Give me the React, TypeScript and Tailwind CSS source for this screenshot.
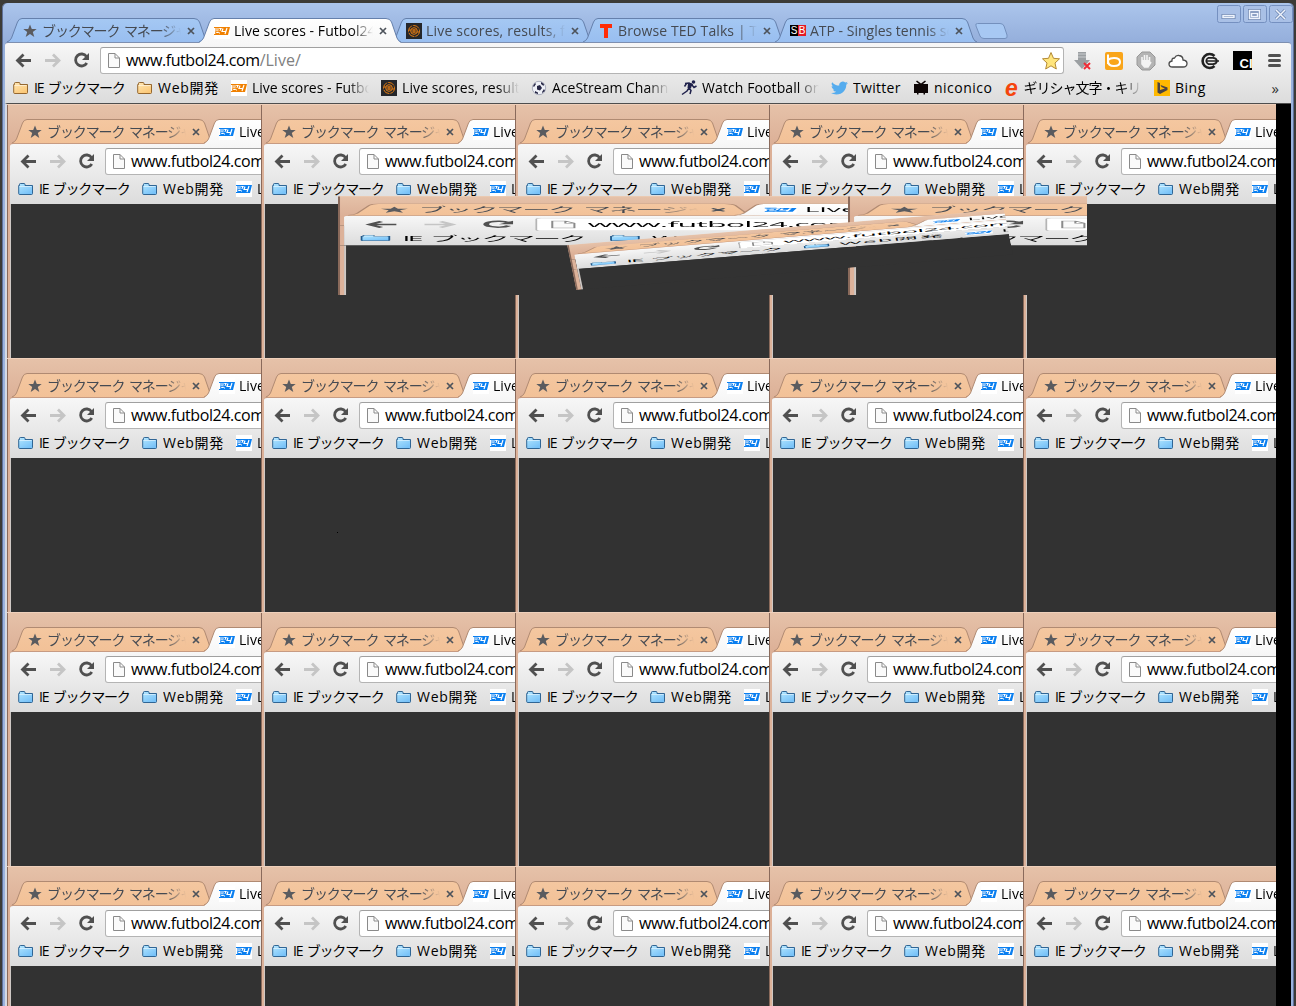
import React from "react";

type Theme = {
  tab: string; tab2: string; edge: string; folderA: string; folderB: string; folderEdge: string; accent: string;
};
const BLUE: Theme = { tab: "#a5c8f3", tab2: "#98bef0", edge: "#6580ac", folderA: "#ffe7b4", folderB: "#fbc878", folderEdge: "#8a5a20", accent: "#f08000" };
const PEACH: Theme = { tab: "#f4c7a0", tab2: "#f2c197", edge: "#b08a72", folderA: "#b4e7ff", folderB: "#78c2f8", folderEdge: "#20588a", accent: "#0a7ff0" };

const FADE = "[mask-image:linear-gradient(to_right,black_calc(100%_-_21px),transparent)]";

function Text24({ theme }: { theme: Theme }) {
  return (
    <svg width="16" height="16" viewBox="0 0 16 16" className="shrink-0">
      <rect width="16" height="16" fill="#fff" />
      <path d="M6 4H16L14 12H4Z" fill={theme.accent} />
      <path d="M0 4.5H6M1 8H6M0 11.5H5" stroke={theme.accent} strokeWidth="1.2" />
      <path d="M3 5.5H7L6 7.5H3L2.500 10H6M9 5.500L8 8.500H12M13 5L11 11" stroke="#fff" strokeWidth="1.2" fill="none" />
      <path d="M1 6H5.500L5 8L2 8.300L1.500 10.500H5" stroke={theme.accent} strokeWidth="1" fill="none" />
    </svg>
  );
}

function Folder({ theme, id }: { theme: Theme; id: string }) {
  return (
    <svg width="16" height="16" viewBox="0 0 16 16" className="shrink-0">
      <defs><linearGradient id={id} x1="0" y1="0" x2="0.6" y2="1"><stop stopColor={theme.folderA} /><stop offset="1" stopColor={theme.folderB} /></linearGradient></defs>
      <path d="M.7 12.500V4.500H1.500V3.200Q1.500 2.500 2.500 2.500H6Q7 2.500 7 3.500V4.500H14.500V12.500Q14.500 13.500 13.500 13.500H1.700Q.7 13.500 .7 12.500Z" fill={`url(#${id})`} stroke={theme.folderEdge} strokeWidth=".9" />
      <path d="M1.500 5.500H13.500" stroke="#fff" strokeOpacity=".5" />
    </svg>
  );
}

const Swirl = () => (
  <svg width="16" height="16" viewBox="0 0 16 16" className="shrink-0">
    <rect width="16" height="16" fill="#25272b" />
    <g fill="none" stroke="#e27b12"><circle cx="8" cy="8" r="5.500" strokeDasharray="7 1" /><circle cx="8" cy="8" r="3.300" /><path d="M5.500 7H10.500M5.500 9H10.500M8 6V10M3 7H5M11 9H13" /></g>
  </svg>
);
const Ted = () => <svg width="16" height="16" viewBox="0 0 16 16" className="shrink-0"><path d="M2 1H14V5H10V15H6V5H2Z" fill="#ff2b06" /></svg>;
const SB = () => (
  <div className="flex h-[11px] w-4 shrink-0 font-['Liberation_Sans'] text-[10px] leading-[11px] text-white">
    <span className="w-2 bg-black text-center">S</span><span className="w-2 bg-[#e31b23] text-center">B</span>
  </div>
);
const Ball = () => (
  <svg width="16" height="16" viewBox="0 0 16 16" className="shrink-0">
    <circle cx="8" cy="8" r="6.700" fill="#eef0f6" stroke="#8d90a5" strokeWidth=".7" />
    <path d="M6 6L9 5L11 8L9 10.500L6 9.500ZM2 6L4 3L5 4L3 7ZM10 2L13 4L12.500 6L10 4ZM13 9L14 11L11 13L11 12ZM4 11L7 12.500L7 14L4 13Z" fill="#262645" />
  </svg>
);
const Runner = () => (
  <svg width="16" height="16" viewBox="0 0 16 16" className="shrink-0">
    <circle cx="12.500" cy="2" r="1.800" fill="#20224c" />
    <path d="M4 3.500L8 3L11 4.500L8 8L10 10.500L9 14M8 8L6 11L1 14.500M11 5L13 7.500L15.500 6M5.500 3.500L3.500 6.500" stroke="#20224c" strokeWidth="1.500" fill="none" />
    <path d="M7 3.500L11 3.500L10 8.500L6.500 8Z" fill="#20224c" />
  </svg>
);
const Bird = () => (
  <svg width="17" height="16" viewBox="0 0 24 24" preserveAspectRatio="none" className="shrink-0">
    <path fill="#55acee" d="M23.950 4.600a10 10 0 0 1-2.800.8 4.900 4.900 0 0 0 2.100-2.700 10 10 0 0 1-3.100 1.200 4.900 4.900 0 0 0-8.400 4.500A14 14 0 0 1 1.700 3.200a4.900 4.900 0 0 0 1.500 6.500 4.900 4.900 0 0 1-2.200-.6 4.900 4.900 0 0 0 3.900 4.900 5 5 0 0 1-2.200.1 4.900 4.900 0 0 0 4.600 3.400A9.900 9.900 0 0 1 0 19.500 14 14 0 0 0 7.500 21.700c9.100 0 14-7.500 14-14v-.6a10 10 0 0 0 2.450-2.500z" />
  </svg>
);
const Nico = () => (
  <svg width="16" height="16" viewBox="0 0 16 16" className="shrink-0">
    <path d="M1 4H6L3 1.500L4 .5L8 3.500L12 .5L13 1.500L10 4H15V13H12V14.500H10.500V13H5.500V14.500H4V13H1Z" fill="#0e0606" />
  </svg>
);
const Bing = () => (
  <svg width="16" height="16" viewBox="0 0 16 16" className="shrink-0"><rect width="16" height="16" fill="#ffb900" /><path d="M3.500 2L6 3V10L11 8.500L7.500 7L6.500 5L13.500 7.500V10L6 14L3.500 12.500Z" fill="#4a4444" /></svg>
);

function Close() {
  return <svg width="8" height="8" viewBox="0 0 8 8" className="mt-px shrink-0"><path d="M1 1L7 7M7 1L1 7" stroke="#4d535b" strokeWidth="1.700" /></svg>;
}

function Tab({ theme, active, icon, children, id }: { theme: Theme; active?: boolean; icon: React.ReactNode; children: React.ReactNode; id: string }) {
  return (
    <div className={active ? "relative z-10 -mr-[5px] h-6 w-[197px] shrink-0" : "relative -mr-[5px] h-6 w-[197px] shrink-0"}>
      <svg width="205" height="25" viewBox="0 0 205 25" className="absolute -left-[4px] top-0">
        <defs><linearGradient id={id} x1="0" y1="0" x2="0" y2="1"><stop stopColor={active ? "#fff" : theme.tab} /><stop offset="1" stopColor={active ? "#f7f7f7" : theme.tab2} /></linearGradient></defs>
        <path d="M0 25Q3 23 4.500 20L10.500 4Q12 .5 15 .5H187Q191 .5 192.500 4L198 20Q199.500 23.500 202 25Z" fill={`url(#${id})`} />
        <path d="M0 24Q3 23 4.500 20L10.500 4Q12 .5 15 .5H187Q191 .5 192.500 4L198 20Q199.500 23.500 202 24" fill="none" stroke={theme.edge} />
        {!active && <path d="M0 24.500H205" stroke={theme.edge} />}
      </svg>
      <div className="relative flex h-full items-center pl-[11px] pt-px">
        {icon}
        <div className={"ml-1 h-6 w-[139px] shrink-0 overflow-hidden whitespace-nowrap text-[14px] leading-6 " + FADE + (active ? " text-black" : " text-[#454a52]")}>{children}</div>
        <span className="ml-[6px]"><Close /></span>
      </div>
    </div>
  );
}

const Star = () => <svg width="16" height="16" viewBox="0 0 16 16" className="shrink-0"><path d="M8 1.500L9.800 6H14.700L10.800 9L12.300 14L8 11L3.700 14L5.200 9L1.300 6H6.200Z" fill="#5a5b5f" /></svg>;

function TabStrip({ theme, full, id }: { theme: Theme; full?: boolean; id: string }) {
  return (
    <div className="flex h-6 pl-[9px]">
      <Tab theme={theme} icon={<Star />} id={id + "a"}><span className="tracking-[-1.1px] [word-spacing:2px]">ブックマーク マネージャ</span></Tab>
      <Tab theme={theme} active icon={<Text24 theme={theme} />} id={id + "b"}><span className="tracking-[0.05px]">Live scores - Futbol24</span></Tab>
      {full && <>
        <Tab theme={theme} icon={<Swirl />} id={id + "c"}><span className="tracking-[0.2px]">Live scores, results, fix</span></Tab>
        <Tab theme={theme} icon={<Ted />} id={id + "d"}><span className="tracking-[0.1px]">Browse TED Talks | TED</span></Tab>
        <Tab theme={theme} icon={<SB />} id={id + "e"}><span>ATP - Singles tennis sc</span></Tab>
        <svg width="34" height="18" viewBox="0 0 34 18" className="ml-1 mt-[5px]"><path d="M2.500 .5H25Q28 .5 29 3L32 12Q33 15.500 30 15.500H9Q6 15.500 5 13L1 3Q0 .5 2.500 .5Z" fill="#a7c8f3" stroke="#7490bd" /></svg>
      </>}
    </div>
  );
}

function NavButtons() {
  return (
    <svg width="84" height="26" viewBox="0 0 84 26" className="shrink-0" fill="none" strokeWidth="2.800">
      <path d="M19 13.500H6M11.500 7.500L5.500 13.500L11.500 19.500" stroke="#505050" />
      <path d="M33 13.500H46M41 7.500L47 13.500L41 19.500" stroke="#c5c5c5" />
      <path d="M74.500 9.500A6 6 0 1 0 74.800 16" stroke="#505050" />
      <path d="M77 6V13H70Z" fill="#505050" />
    </svg>
  );
}

function Toolbar({ full }: { full?: boolean }) {
  return (
    <div className="flex h-[33px] items-start pt-1">
      <div className="ml-[7px] w-[89px] shrink-0"><NavButtons /></div>
      <div className="-ml-px flex h-[27px] w-[964px] shrink-0 items-center rounded-[3px] border border-[#b4b4b4] border-t-[#a0a0a0] bg-white pl-[6px]">
        <svg width="14" height="17" viewBox="0 0 14 17" className="shrink-0"><path d="M1.500 1.500H8L12.500 6V15.500H1.500ZM8 1.500V6H12.500" fill="#fafafa" stroke="#8a8a8a" /></svg>
        <span className="mb-[2px] ml-[5px] text-[16px] leading-6 tracking-[-0.42px] text-black">www.futbol24.com<span className="tracking-[0px] text-[#808080]">/Live/</span></span>
        {full && <svg width="20" height="20" viewBox="0 0 20 20" className="ml-auto mr-[2px]"><path d="M10 1.500L12.500 7.300L18.500 7.800L14 12L15.300 18L10 14.800L4.700 18L6 12L1.500 7.800L7.500 7.300Z" fill="#ffe57c" stroke="#b48a35" strokeLinejoin="round" /></svg>}
      </div>
      {full && <div className="ml-[2px] grid h-[27px] shrink-0 grid-cols-[repeat(7,32px)] items-center justify-items-center">
        <svg width="20" height="20" viewBox="0 0 20 20"><path d="M6 1H14V9H18L10 18L2 9H6Z" fill="#9b9fa2" /><path d="M6 3H14M6 6H14" stroke="#c8cbce" /><path d="M12 12L18 18M18 12L12 18" stroke="#ee2b35" strokeWidth="2" /></svg>
        <svg width="18" height="18" viewBox="0 0 18 18"><rect width="18" height="18" rx="2" fill="#f9a51a" /><path d="M3 2.500V12M3 8Q5 6 9 6Q15 6 15 10Q15 14 9 14Q3 14 3 9" stroke="#fff" strokeWidth="2" fill="none" /></svg>
        <svg width="20" height="20" viewBox="0 0 20 20"><path d="M6 1H14L19 6V14L14 19H6L1 14V6Z" fill="#b4b4b4" stroke="#989898" /><path d="M6 10V6M8.500 10V4M11 10V4M13.500 11V6M6 9V13L8.500 16H12L15 11" stroke="#f4f4f4" strokeWidth="1.600" fill="none" /><path d="M6 9H14V13L12 16H9L6 13Z" fill="#f4f4f4" /></svg>
        <svg width="20" height="16" viewBox="0 0 20 16"><path d="M4.500 14Q1 14 1 11Q1 8.500 4 8Q3.500 5 6.500 5Q8 2 11 2.500Q15 3 15 7Q19 7.500 19 10.500Q19 14 15 14Z" fill="#fff" stroke="#4a4a4a" strokeWidth="1.300" /></svg>
        <svg width="20" height="18" viewBox="0 0 20 18" fill="none" stroke="#222"><path d="M14.500 4A7 7 0 1 0 14.500 14" strokeWidth="2.600" /><path d="M7 9H19M13 5.800H8.500Q6.200 7 6.200 9Q6.200 11 8.500 12.200H13Q16.500 12 17 9Q16.500 6 13 5.800" strokeWidth="1.700" /></svg>
        <div className="flex size-[19px] items-end justify-end overflow-hidden bg-black font-['Liberation_Sans'] text-[13px] font-bold leading-[13px] text-white"><span className="translate-x-px">CI</span></div>
        <div className="flex w-[13px] flex-col gap-[2px]"><i className="h-[3px] rounded-sm bg-[#505050]" /><i className="h-[3px] rounded-sm bg-[#505050]" /><i className="h-[3px] rounded-sm bg-[#505050]" /></div>
      </div>}
    </div>
  );
}

function Mark({ icon, w, fade, children }: { icon: React.ReactNode; w: string; fade?: boolean; children: React.ReactNode }) {
  return (
    <div className={"flex shrink-0 items-center " + w}>
      {icon}
      <span className={"ml-[5px] min-w-0 overflow-hidden whitespace-nowrap text-[14px] leading-6 text-black " + (fade ? FADE : "")}>{children}</span>
    </div>
  );
}

function Bookmarks({ theme, full, id }: { theme: Theme; full?: boolean; id: string }) {
  return (
    <div className="flex h-[27px] items-start pl-[8px]">
      <Mark w="w-[124px]" icon={<Folder theme={theme} id={id + "f"} />}><span className="tracking-[-1.2px] [word-spacing:2px]">IE ブックマーク</span></Mark>
      <Mark w="w-[94px]" icon={<Folder theme={theme} id={id + "g"} />}><span className="tracking-[0.7px]">Web開発</span></Mark>
      <Mark w="w-[138px] mr-3" fade icon={<Text24 theme={theme} />}>Live scores - Futbol24</Mark>
      {full && <>
        <Mark w="w-[138px] mr-3" fade icon={<Swirl />}><span className="tracking-[0.1px]">Live scores, results</span></Mark>
        <Mark w="w-[138px] mr-3" fade icon={<Ball />}>AceStream Channels</Mark>
        <Mark w="w-[138px] mr-3" fade icon={<Runner />}><span className="tracking-[0.1px]">Watch Football on</span></Mark>
        <Mark w="w-[82px]" icon={<Bird />}><span className="tracking-[0.3px]">Twitter</span></Mark>
        <Mark w="w-[91px]" icon={<Nico />}><span className="tracking-[0.5px]">niconico</span></Mark>
        <Mark w="w-[138px] mr-3" fade icon={<span className="w-4 text-center font-['Liberation_Sans'] text-[23px] font-bold italic leading-4 text-[#f5450d]">e</span>}><span className="tracking-[-1px]">ギリシャ文字・キリル</span></Mark>
        <Mark w="w-[80px]" icon={<Bing />}><span className="tracking-[0.5px]">Bing</span></Mark>
        <span className="ml-auto mr-3 text-[15px] leading-6 text-[#333]">»</span>
      </>}
    </div>
  );
}

function Header({ theme, full, id }: { theme: Theme; full?: boolean; id: string }) {
  return (
    <>
      <div className="h-[15px] shrink-0" />
      <TabStrip theme={theme} full={full} id={id} />
      <div className={full ? "relative mx-[3px] h-[61px] shrink-0 rounded-t-[3px] border-t border-t-[#7d8fb0] bg-linear-to-b from-[#f7f7f7] to-[#dcdcdc]" : "relative ml-[3px] h-[61px] w-[1286px] shrink-0 rounded-tl-[3px] border-t border-t-[#c79b82] bg-linear-to-b from-[#f7f7f7] to-[#dcdcdc]"}>
        <Toolbar full={full} />
        <Bookmarks theme={theme} full={full} id={id} />
      </div>
    </>
  );
}

function Tile({ id, cut }: { id: string; cut?: boolean }) {
  return (
    <div className={"relative w-[254px] " + (cut ? "h-[184px] [clip-path:inset(0)]" : "h-[254px] overflow-hidden bg-[#323232]")}>
      <div className="flex h-full flex-col bg-[linear-gradient(#e6c2a9,#dcb097_40px)] bg-[length:100%_60px] bg-no-repeat">
        <Header theme={PEACH} id={id} />
        <div className="flex-1 border-l-[3px] border-[#dcb29a] bg-[#323232]">
          <div className="h-full w-px bg-[#cfc8c4]" />
        </div>
      </div>
      <div className="absolute left-0 top-[60px] h-[40px] w-[3px] bg-[#dcb29a]" />
      <div className="absolute bottom-0 left-0 top-0 w-px bg-[#8a6a5b]" />
      <div className="absolute inset-x-0 top-0 h-px bg-[#efd0bb]" />
    </div>
  );
}

export default function App() {
  return (
    <div className="flex h-[1006px] w-[1296px] flex-col overflow-hidden bg-[#3c3b37] pl-[2px] pr-[2px] pt-[3px] font-['Open_Sans','Noto_Sans_CJK_JP',sans-serif]">
      <div className="relative flex min-h-0 flex-1 flex-col rounded-t-[5px] bg-[#9bb3de] bg-[linear-gradient(#abc5ec,#94aedb_40px,#9bb3de_100px)] shadow-[inset_1px_0_#5e7099,inset_-1px_0_#5e7099]">
        <Header theme={BLUE} full id="m" />
        <div className="absolute right-[1px] top-[2px] flex gap-[2px]">
          {["M6 12.500H17V10.500H6Z", "M6.500 5.500H16.500V13.500H6.500ZM8.500 8.500H14.500V11.500H8.500Z", "M7 5L16 14M16 5L7 14"].map((d, i) => (
            <svg key={i} width="24" height="18" viewBox="0 0 24 18"><rect x=".5" y=".5" width="23" height="17" rx="2" fill="#a9c0e6" stroke="#7590c0" /><path d={d} fill="none" stroke="#6b84b0" strokeWidth="3" /><path d={d} fill="none" stroke="#eef3fc" strokeWidth="1.500" /></svg>
          ))}
        </div>
        <div className="relative mx-[3px] min-h-0 flex-1 overflow-hidden border-l-2 border-t border-[#4e4e4e] border-l-[#d5dae4] bg-black">
          <div className="grid w-[1269px] grid-cols-[repeat(5,254px)] overflow-hidden">
            {Array.from({ length: 20 }, (_, i) => <Tile key={i} id={"t" + i} />)}
          </div>
          <div className="absolute left-[331px] top-[92px] h-[99px] w-[749px] overflow-hidden bg-[#323232]">
            <div className="absolute left-0 top-0 origin-top-left transform-[scale(2.012,0.495)]"><Tile id="s1" /></div>
            <div className="absolute left-[510px] top-0 origin-top-left transform-[scale(2.012,0.495)]"><Tile id="s2" /></div>
            <div className="absolute left-[229px] top-[49px] origin-top-left transform-[matrix(1.72,-0.14,0.05,0.245,0,0)]"><Tile id="s3" cut /></div>
          </div>
          <div className="absolute left-[330px] top-[428px] size-px bg-black" />
        </div>
      </div>
    </div>
  );
}
